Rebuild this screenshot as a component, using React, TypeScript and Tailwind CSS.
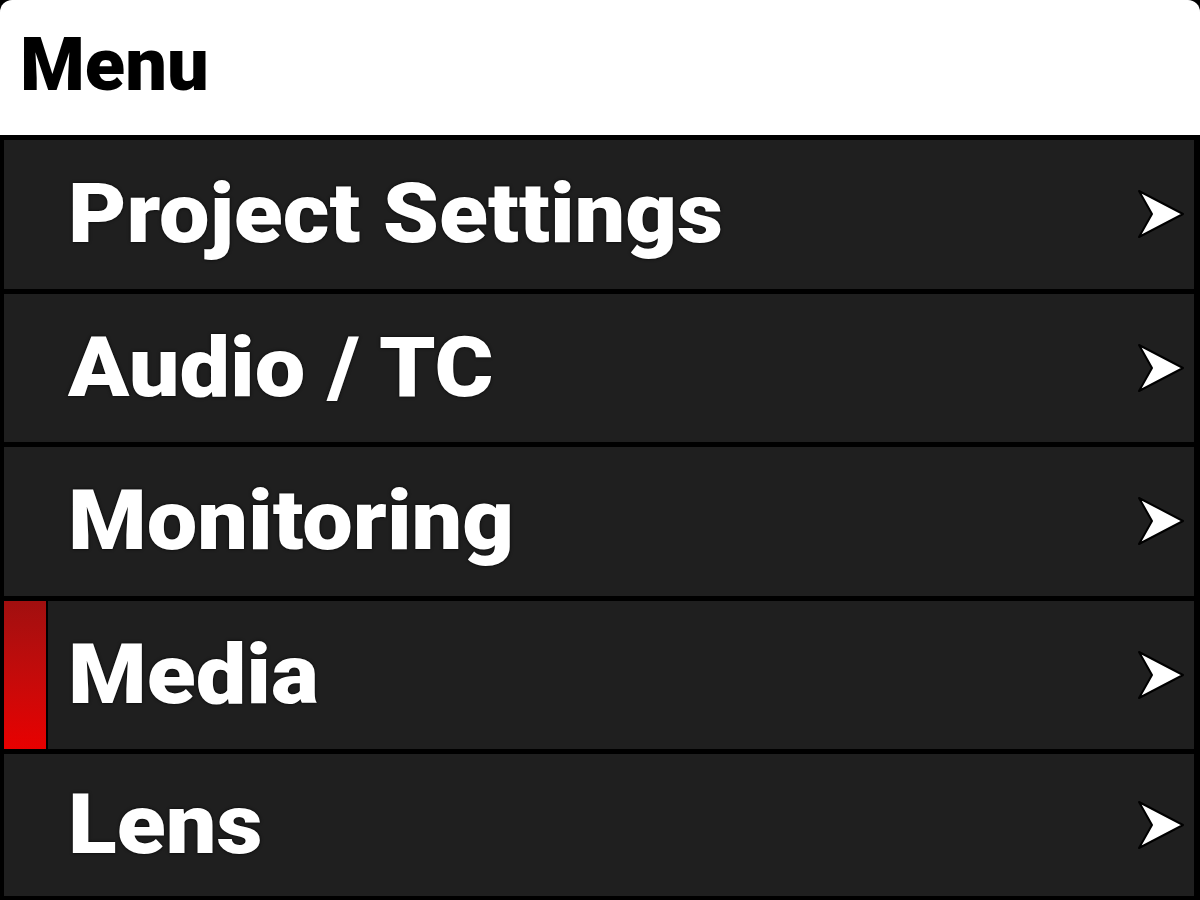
const items = [
  { label: "Project Settings" },
  { label: "Audio / TC" },
  { label: "Monitoring" },
  { label: "Media", active: true },
  { label: "Lens" },
];

function Chevron() {
  return (
    <svg width="48" height="50" viewBox="0 0 48 50" aria-hidden className="shrink-0">
      <polygon
        points="2,2 46,25 2,48 15,25"
        fill="#fff"
        stroke="#000"
        strokeWidth="2"
        strokeLinejoin="round"
      />
    </svg>
  );
}

function MenuRow({ label, active, last }: { label: string; active?: boolean; last?: boolean }) {
  return (
    <div
      className={
        "relative flex shrink-0 items-center bg-[#1f1f1f] pl-[64px] pr-[9px] " +
        (last ? "h-[142px]" : "h-[148.5px]")
      }
    >
      {active && (
        <div className="absolute top-0 bottom-0 left-0 w-[44px] border-r-2 border-black bg-gradient-to-b from-[#a10f0f] to-[#e80000]" />
      )}
      <div className="flex-1">
        <span className="inline-block origin-left scale-x-[1.07] text-[84px] font-black leading-none text-white [text-shadow:0_0_3px_#000]">
          {label}
        </span>
      </div>
      <Chevron />
    </div>
  );
}

export default function App() {
  return (
    <div
      className="flex h-[900px] w-[1200px] flex-col overflow-hidden bg-black"
      style={{ fontFamily: "Roboto, 'Liberation Sans', sans-serif" }}
    >
      <div className="flex h-[135px] shrink-0 items-center rounded-t-[12px] bg-white pb-[6px] pl-[20px]">
        <h1 className="text-[74px] font-black leading-none text-black">Menu</h1>
      </div>
      <div className="flex flex-col gap-[5px] pt-[5px] pl-[4px] pr-[6px]">
        {items.map((it, i) => (
          <MenuRow key={it.label} label={it.label} active={it.active} last={i === items.length - 1} />
        ))}
      </div>
    </div>
  );
}
